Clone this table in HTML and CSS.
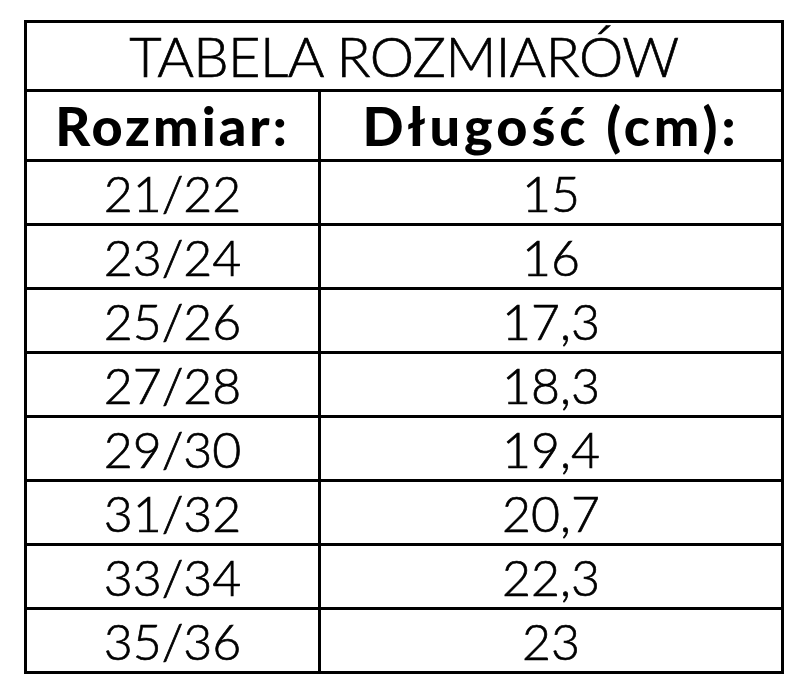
FILE: index.html
```html
<!DOCTYPE html>
<html lang="pl">
<head>
<meta charset="utf-8">
<title>Tabela rozmiarów</title>
<link rel="stylesheet" href="styles.css">
</head>
<body>
<div class="sheet">
  <div class="table">
    <div class="title">TABELA ROZMIARÓW</div>
    <div class="row head">
      <div class="cell c1">Rozmiar:</div>
      <div class="cell c2">Długość (cm):</div>
    </div>
    <div class="row"><div class="cell c1">21/22</div><div class="cell c2">15</div></div>
    <div class="row"><div class="cell c1">23/24</div><div class="cell c2">16</div></div>
    <div class="row"><div class="cell c1">25/26</div><div class="cell c2">17,3</div></div>
    <div class="row"><div class="cell c1">27/28</div><div class="cell c2">18,3</div></div>
    <div class="row"><div class="cell c1">29/30</div><div class="cell c2">19,4</div></div>
    <div class="row"><div class="cell c1">31/32</div><div class="cell c2">20,7</div></div>
    <div class="row"><div class="cell c1">33/34</div><div class="cell c2">22,3</div></div>
    <div class="row last"><div class="cell c1">35/36</div><div class="cell c2">23</div></div>
  </div>
</div>
</body>
</html>
```
FILE: styles.css
```css
html, body {
  margin: 0;
  padding: 0;
  background: #fff;
}
.sheet {
  padding: 20px 0 0 24px;
  font-family: Lato, "DejaVu Sans", sans-serif;
  color: #000;
}
.table {
  width: 760px;
  box-sizing: border-box;
  border: 3px solid #000;
}
.title {
  height: 66px;
  border-bottom: 3px solid #000;
  display: flex;
  align-items: center;
  justify-content: center;
  font-size: 56px;
  font-weight: 300;
  letter-spacing: -0.6px;
  -webkit-text-stroke: 0.7px #000;
  line-height: 1;
}
.row {
  display: grid;
  grid-template-columns: 294px 1fr;
  height: 61px;
  border-bottom: 3px solid #000;
}
.row.last {
  border-bottom: none;
}
.row.head {
  height: 67px;
}
.cell {
  display: flex;
  align-items: center;
  justify-content: center;
  font-size: 50px;
  font-weight: 300;
  -webkit-text-stroke: 0.7px #000;
  line-height: 1;
}
.c1 {
  border-right: 3px solid #000;
}
.head .cell {
  font-size: 54px;
  font-weight: 900;
  letter-spacing: 3px;
  -webkit-text-stroke: 0;
}
.head .c2 {
  letter-spacing: 4px;
}
```
